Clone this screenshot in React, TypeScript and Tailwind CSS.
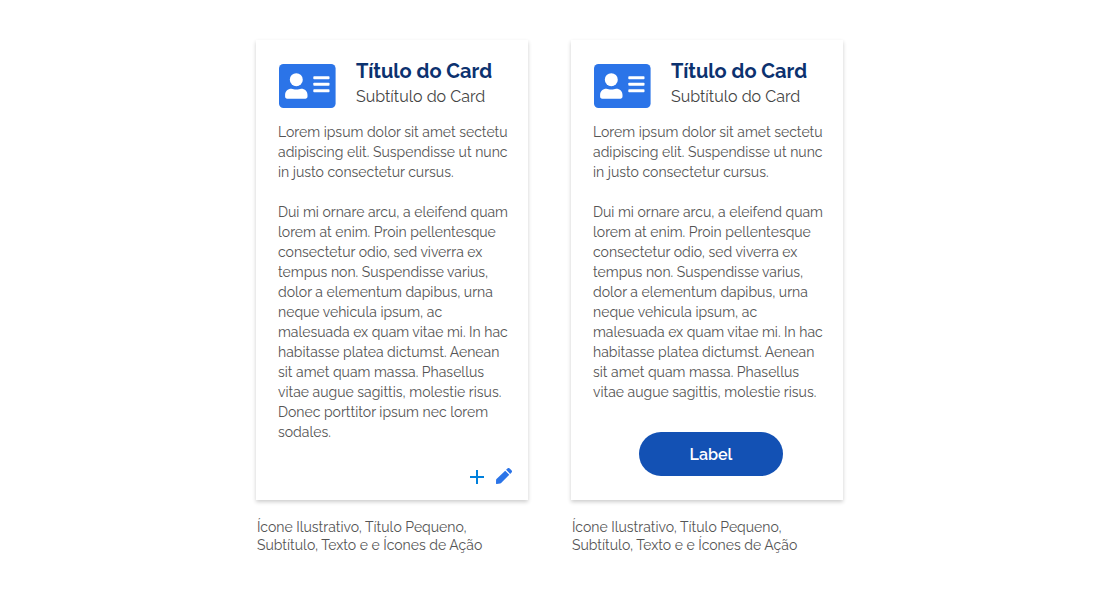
import type { ReactNode } from "react";

const INTRO = `Lorem ipsum dolor sit amet sectetu
adipiscing elit. Suspendisse ut nunc
in justo consectetur cursus.`;

const BODY = `Dui mi ornare arcu, a eleifend quam
lorem at enim. Proin pellentesque
consectetur odio, sed viverra ex
tempus non. Suspendisse varius,
dolor a elementum dapibus, urna
neque vehicula ipsum, ac
malesuada ex quam vitae mi. In hac
habitasse platea dictumst. Aenean
sit amet quam massa. Phasellus
vitae augue sagittis, molestie risus.`;

const EXTRA = `
Donec porttitor ipsum nec lorem
sodales.`;

function ContactIcon() {
  return (
    <svg className="h-11 w-[57px] shrink-0" viewBox="0 0 57 44" aria-hidden="true">
      <rect width="56.6" height="44" rx="4.5" fill="#2b74e8" />
      <g fill="#fff">
        <circle cx="17.3" cy="15.7" r="6.5" />
        <path d="M12.5 24.7c1.5 0 2.6.8 4.8.8s3.3-.8 4.8-.8c3.9 0 6.4 2.6 6.4 6.2v1.7c0 1.3-.9 2.1-2.1 2.1H8.2c-1.3 0-2.1-.8-2.1-2.1v-1.7c0-3.6 2.5-6.2 6.4-6.2z" />
        <rect x="34.3" y="12.2" width="16.2" height="3.1" rx=".8" />
        <rect x="34.3" y="18.7" width="16.2" height="3.1" rx=".8" />
        <rect x="34.3" y="25.2" width="16.2" height="3.1" rx=".8" />
      </g>
    </svg>
  );
}

function PlusIcon() {
  return (
    <svg className="size-4" viewBox="0 0 16 16" aria-hidden="true">
      <path d="M8 1v14M1 8h14" fill="none" stroke="#0080dc" strokeWidth="2" />
    </svg>
  );
}

function PencilIcon() {
  return (
    <svg className="size-4" viewBox="0 0 16 16" fill="#2b74e8" aria-hidden="true">
      <path d="M9.2 2.7l4.1 4.1-8.2 8.2c-.3.3-.5.4-.9.5L.8 16c-.5.1-.8-.2-.8-.7l.1-3.5c0-.4.1-.6.4-.9z" />
      <path d="M10.1 1.8L11.4.5c.7-.7 1.6-.7 2.3 0l1.8 1.8c.7.7.7 1.6 0 2.3l-1.3 1.3z" />
    </svg>
  );
}

function InfoCard({ text, children }: { text: string; children: ReactNode }) {
  return (
    <figure className="w-[272px]">
      <article className="flex min-h-[460px] flex-col bg-white pt-5 pl-[22px] shadow-[0_2px_4px_rgba(0,0,0,0.2)]">
        <header className="flex gap-5">
          <div className="pt-1 pl-px">
            <ContactIcon />
          </div>
          <div>
            <h2 className="text-xl leading-[22px] font-bold text-[#0c326f]">Título do Card</h2>
            <p className="pt-1 text-base leading-[22px] font-normal text-[#444]">Subtítulo do Card</p>
          </div>
        </header>
        <div className="flex flex-col gap-5 pt-3.5 text-sm leading-5 font-normal whitespace-pre text-[#555]">
          <p>{INTRO}</p>
          <p>{text}</p>
        </div>
        {children}
      </article>
      <figcaption className="pt-[18px] pl-px text-sm leading-[18px] font-normal text-[#555]">
        Ícone Ilustrativo, Título Pequeno,
        <br />
        Subtítulo, Texto e e Ícones de Ação
      </figcaption>
    </figure>
  );
}

export default function App() {
  return (
    <main className="flex min-h-screen flex-wrap content-start justify-center gap-x-[43px] gap-y-10 bg-white pt-10 pr-px font-['Raleway','Lato',sans-serif]">
      <InfoCard text={BODY + EXTRA}>
        <div className="mt-auto flex items-center justify-end gap-[11px] pr-4 pb-[15px]">
          <button type="button" aria-label="Adicionar">
            <PlusIcon />
          </button>
          <button type="button" aria-label="Editar" className="pb-px">
            <PencilIcon />
          </button>
        </div>
      </InfoCard>
      <InfoCard text={BODY}>
        <div className="mt-auto flex justify-center pr-[14px] pb-6">
          <button type="button" className="h-11 w-36 rounded-full bg-[#1351b4] pt-px text-base font-semibold text-white">
            Label
          </button>
        </div>
      </InfoCard>
    </main>
  );
}
